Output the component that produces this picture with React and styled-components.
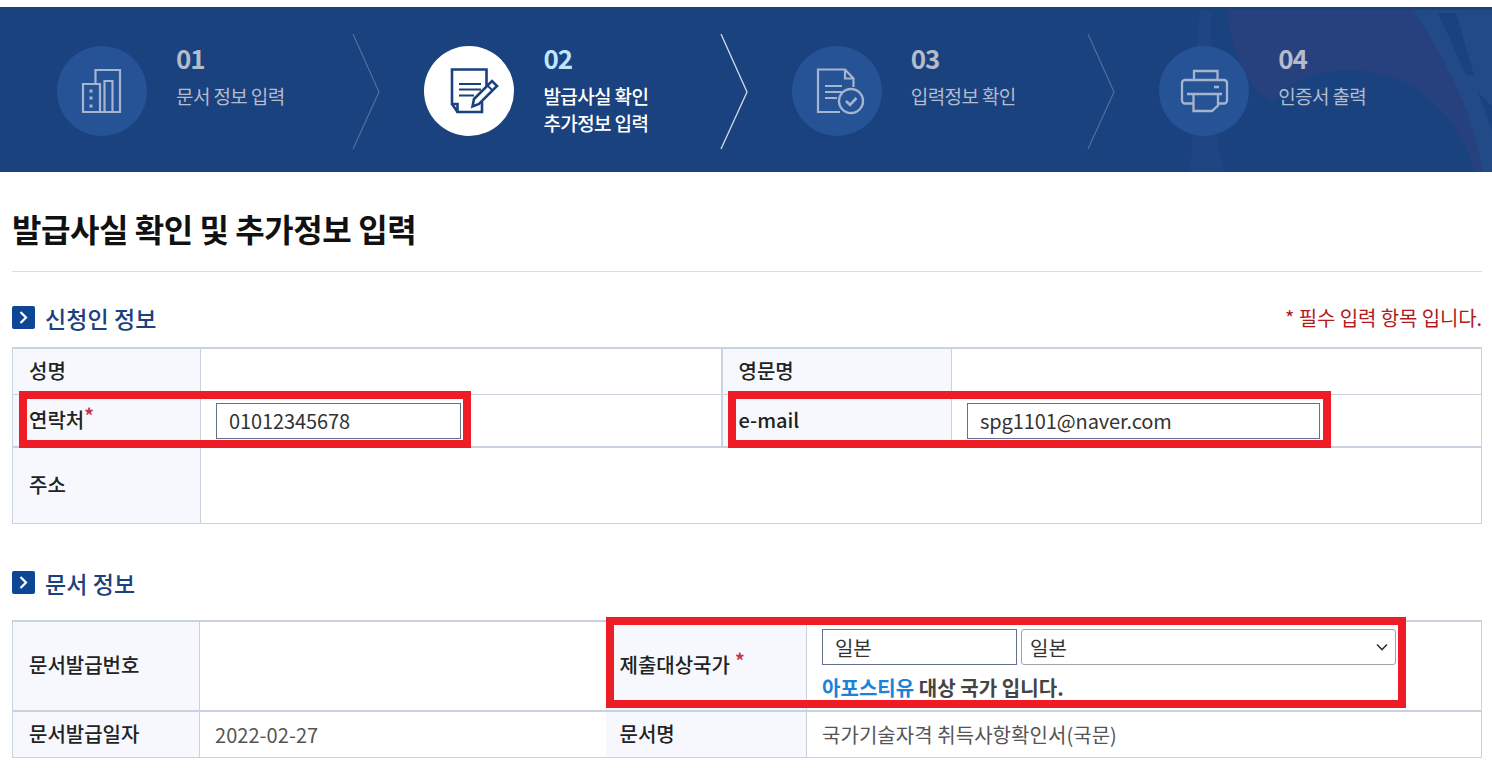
import React from 'react';
import styled, { createGlobalStyle } from 'styled-components';

const Global = createGlobalStyle`
  html, body { margin: 0; padding: 0; background: #fff; }
  body { font-family: "Noto Sans CJK KR", "Noto Sans", sans-serif; color: #222; overflow: hidden; }
`;

const Page = styled.div`
  width: 1492px;
  height: 768px;
  padding-top: 7px;
  box-sizing: border-box;
  overflow: hidden;
`;

const Banner = styled.div`
  position: relative;
  height: 165px;
  background: #1a427f;
  display: grid;
  grid-template-columns: repeat(4, 367.4px);
  overflow: hidden;
`;

const BannerArt = styled.svg`
  position: absolute;
  left: 0;
  top: 0;
`;

const Step = styled.div`
  position: relative;
  display: flex;
  align-items: flex-start;
  padding: 39px 0 0 57px;
  height: 100%;
  box-sizing: border-box;
`;

const Circle = styled.div`
  width: 90px;
  height: 90px;
  flex: none;
  border-radius: 50%;
  background: ${p => (p.$active ? '#fff' : '#265296')};
  color: ${p => (p.$active ? '#1a427f' : '#a5b5d0')};
  svg { display: block; }
`;

const StepText = styled.div`
  margin: -3px 0 0 29px;
`;

const StepNum = styled.div`
  font-size: 26px;
  line-height: 30px;
  font-weight: 700;
  letter-spacing: -1px;
  color: ${p => (p.$active ? '#bfe6fb' : '#b4bccb')};
`;

const StepLabel = styled.div`
  margin-top: 9px;
  font-size: 19px;
  line-height: 27px;
  letter-spacing: -0.6px;
  font-weight: ${p => (p.$active ? 500 : 400)};
  color: ${p => (p.$active ? '#fff' : '#b4bccb')};
`;

const Chevron = styled.svg`
  position: absolute;
  top: 27px;
  right: -13px;
`;

const Content = styled.div`
  padding: 0 10px 0 12px;
`;

const Title = styled.h1`
  margin: 0;
  height: 100px;
  box-sizing: border-box;
  padding-top: 32px;
  font-size: 32px;
  line-height: 48px;
  font-weight: 700;
  letter-spacing: -0.45px;
  color: #111;
  border-bottom: 1px solid #ddd;
`;

const SectionHead = styled.div`
  display: flex;
  align-items: center;
  justify-content: space-between;
  height: ${p => p.$h}px;
  margin-top: ${p => p.$top}px;
  padding-top: ${p => p.$pad || 0}px;
  box-sizing: border-box;
`;

const SectionTitle = styled.h2`
  display: flex;
  align-items: center;
  gap: 10px;
  margin: 0;
  font-size: 23px;
  line-height: 32px;
  font-weight: 500;
  letter-spacing: 0.1px;
  color: #1a427f;
`;

const Bullet = styled.span`
  width: 23px;
  height: 23px;
  border-radius: 2px;
  background: #0f4595;
  display: flex;
  align-items: center;
  justify-content: center;
`;

const Required = styled.span`
  font-size: 20px;
  letter-spacing: -0.1px;
  color: #b01c1c;
`;

const TableWrap = styled.div`
  position: relative;
  width: 1470px;
  margin-top: ${p => p.$top || 0}px;
`;

const Table = styled.table`
  width: 100%;
  table-layout: fixed;
  border-collapse: collapse;
  border-top: 2px solid #c9d2de;
  border-left: 1px solid #c9d2de;
  border-right: 1px solid #c9d2de;
  border-bottom: 1px solid #c9d2de;
`;

const Row = styled.tr`
  height: ${p => p.$h}px;
  border-bottom: ${p => (p.$thick ? '2px' : '1px')} solid #c9d2de;
`;

const Th = styled.th`
  background: #f6f8fd;
  border-right: 1px solid #c9d2de;
  ${p => p.$gap && 'border-left: 2px solid #c9d2de;'}
  padding: 0 0 2px ${p => p.$pad || 16}px;
  text-align: left;
  font-size: 20px;
  font-weight: 500;
  color: #222;
`;

const Td = styled.td`
  padding: 0 15px;
  font-size: 20px;
  letter-spacing: 0.05px;
  color: #555;
`;

const Star = styled.span`
  color: #c8324a;
  font-size: 19px;
  font-weight: 700;
  position: relative;
  top: -5px;
  margin-left: ${p => p.$gap || 0}px;
`;

const TextBox = styled.input`
  display: block;
  box-sizing: border-box;
  width: ${p => p.$w}px;
  height: 36px;
  margin-top: 1px;
  padding: 0 12px;
  border: 1px solid #64718c;
  border-radius: 0;
  background: #fff;
  font: 400 20px "Noto Sans CJK KR", "Noto Sans", sans-serif;
  letter-spacing: -0.1px;
  color: #333;
  outline: none;
`;

const CountryRow = styled.div`
  display: flex;
  gap: 4px;
`;

const CountryBox = styled(TextBox)`
  width: 195px;
  margin-top: 0;
`;

const SelectBox = styled.div`
  box-sizing: border-box;
  width: 375px;
  height: 36px;
  display: flex;
  align-items: center;
  justify-content: space-between;
  padding: 0 5px 0 8px;
  border: 1px solid #a3a3a3;
  border-radius: 3px;
  font-size: 20px;
  color: #333;
`;

const Note = styled.div`
  margin-top: 9px;
  font-size: 20px;
  line-height: 28px;
  font-weight: 700;
  color: #444;
  span { color: #1c82d8; }
`;

const Mark = styled.div`
  position: absolute;
  left: ${p => p.$x}px;
  top: ${p => p.$y}px;
  width: ${p => p.$w}px;
  height: ${p => p.$h}px;
  box-sizing: border-box;
  border: 8px solid #ee1c25;
  pointer-events: none;
`;

const BuildingIcon = () => (
  <svg width="90" height="90" viewBox="0 0 90 90" fill="none" stroke="currentColor" strokeWidth="2.2">
    <path d="M26 38h17v28H26zM38.500 38V24h24.500v42H43M47.500 65V35h8v30" />
    <path d="M32.500 45h3M32.500 52h3M32.500 60h3" strokeWidth="3" />
  </svg>
);

const DocIcon = () => (
  <svg width="90" height="90" viewBox="0 0 90 90" fill="none" stroke="currentColor">
    <path d="M62.500 41V23.500H28V58h5.500v8H58V56M28 58l5.500 8" strokeWidth="2.600" />
    <path d="M35 38h22M35 43.500h22M35 49.500h15" strokeWidth="2.200" />
    <path d="M48.500 60.500l1.500-7.500 18-18 5 5-18 18z" strokeWidth="2.600" fill="#fff" />
    <path d="M63.500 39.500l5 5" strokeWidth="2" />
  </svg>
);

const CheckDocIcon = () => (
  <svg width="90" height="90" viewBox="0 0 90 90" fill="none" stroke="currentColor">
    <path d="M48 66H26V23.500h27l8.500 9V41M53 23.500v9h8.500" strokeWidth="2.200" />
    <path d="M33 40h17M33 46h17M33 52h12" strokeWidth="2.200" />
    <circle cx="59" cy="55" r="12" strokeWidth="2.400" fill="#265296" />
    <path d="M54 55l4 3.800 6.500-6.800" strokeWidth="2.600" />
  </svg>
);

const PrinterIcon = () => (
  <svg width="90" height="90" viewBox="0 0 90 90" fill="none" stroke="currentColor" strokeWidth="2.300">
    <path d="M35 34V25h23.500v9" />
    <path d="M34 57.500h-8a3 3 0 0 1-3-3V37a3 3 0 0 1 3-3h39a3 3 0 0 1 3 3v17.500a3 3 0 0 1-3 3h-6" />
    <path d="M28 48h35" />
    <path d="M34.500 48v17H53l6-5.500V48" />
    <path d="M55 41h5" strokeWidth="2.600" />
  </svg>
);

const StepChevron = ({ active }) => (
  <Chevron width="28" height="116" viewBox="0 0 28 116" fill="none">
    <path d="M1 0l26 58L1 115" stroke={active ? '#d5dcea' : '#54739f'} strokeWidth={active ? 1.3 : 1.100} />
  </Chevron>
);

const steps = [
  { num: '01', label: ['문서 정보 입력'], Icon: BuildingIcon },
  { num: '02', label: ['발급사실 확인', '추가정보 입력'], Icon: DocIcon, active: true },
  { num: '03', label: ['입력정보 확인'], Icon: CheckDocIcon },
  { num: '04', label: ['인증서 출력'], Icon: PrinterIcon },
];

const SectionBullet = () => (
  <Bullet>
    <svg width="11" height="13" viewBox="0 0 11 13" fill="none" stroke="#fff" strokeWidth="2.200">
      <path d="M2.500 1l5.500 5.500L2.500 12" />
    </svg>
  </Bullet>
);

export default function App() {
  return (
    <Page>
      <Global />
      <Banner>
        <BannerArt width="1492" height="165" viewBox="0 0 1492 165">
          <path d="M1200 3h12c-4 67 0 127 14 162h-36c5-55 5-105 10-162z" fill="#1f4682" />
          <path d="M1227 3h186c37 57 62 107 69 162h-7c-10-35-25-55-45-72-50-45-130-35-158 2-22-10-40-45-45-92z" fill="#27417f" />
          <path d="M1413 3h79v162h-10c-7-55-32-105-69-162z" fill="#214a86" />
          <path d="M1438 6h18l18 62h-8zM1478 85l14 14v25z" fill="#1a427f" />
        </BannerArt>
        {steps.map(({ num, label, Icon, active }, i) => (
          <Step key={num}>
            <Circle $active={active}><Icon /></Circle>
            <StepText>
              <StepNum $active={active}>{num}</StepNum>
              <StepLabel $active={active}>
                {label.map(line => <div key={line}>{line}</div>)}
              </StepLabel>
            </StepText>
            {i < 3 && <StepChevron active={active} />}
          </Step>
        ))}
      </Banner>

      <Content>
        <Title>발급사실 확인 및 추가정보 입력</Title>

        <SectionHead $h={75} $top={0} $pad={16}>
          <SectionTitle><SectionBullet />신청인 정보</SectionTitle>
          <Required>* 필수 입력 항목 입니다.</Required>
        </SectionHead>
        <TableWrap>
          <Table>
            <colgroup>
              <col style={{ width: 188 }} />
              <col style={{ width: 521 }} />
              <col style={{ width: 230 }} />
              <col />
            </colgroup>
            <tbody>
              <Row $h={46}>
                <Th>성명</Th>
                <Td />
                <Th $gap>영문명</Th>
                <Td />
              </Row>
              <Row $h={53} $thick>
                <Th>연락처<Star>*</Star></Th>
                <Td><TextBox $w={245} defaultValue="01012345678" /></Td>
                <Th $gap>e-mail</Th>
                <Td><TextBox $w={353} defaultValue="spg1101@naver.com" /></Td>
              </Row>
              <Row $h={76}>
                <Th>주소</Th>
                <Td colSpan={3} />
              </Row>
            </tbody>
          </Table>
          <Mark $x={7} $y={44} $w={452} $h={57} />
          <Mark $x={716} $y={44} $w={603} $h={57} />
        </TableWrap>

        <SectionHead $h={32} $top={43}>
          <SectionTitle><SectionBullet />문서 정보</SectionTitle>
        </SectionHead>
        <TableWrap $top={21}>
          <Table>
            <colgroup>
              <col style={{ width: 187 }} />
              <col style={{ width: 406 }} />
              <col style={{ width: 201 }} />
              <col />
            </colgroup>
            <tbody>
              <Row $h={90} $thick>
                <Th>문서발급번호</Th>
                <Td />
                <Th $pad={14}>제출대상국가<Star $gap={5}>*</Star></Th>
                <Td>
                  <CountryRow>
                    <CountryBox defaultValue="일본" />
                    <SelectBox>
                      일본
                      <svg width="16" height="16" viewBox="0 0 16 16" fill="none" stroke="#333" strokeWidth="1.600">
                        <path d="M3 5.500l5 5 5-5" />
                      </svg>
                    </SelectBox>
                  </CountryRow>
                  <Note><span>아포스티유</span> 대상 국가 입니다.</Note>
                </Td>
              </Row>
              <Row $h={47}>
                <Th>문서발급일자</Th>
                <Td>2022-02-27</Td>
                <Th $pad={14}>문서명</Th>
                <Td>국가기술자격 취득사항확인서(국문)</Td>
              </Row>
            </tbody>
          </Table>
          <Mark $x={594} $y={-3} $w={800} $h={91} />
        </TableWrap>
      </Content>
    </Page>
  );
}
